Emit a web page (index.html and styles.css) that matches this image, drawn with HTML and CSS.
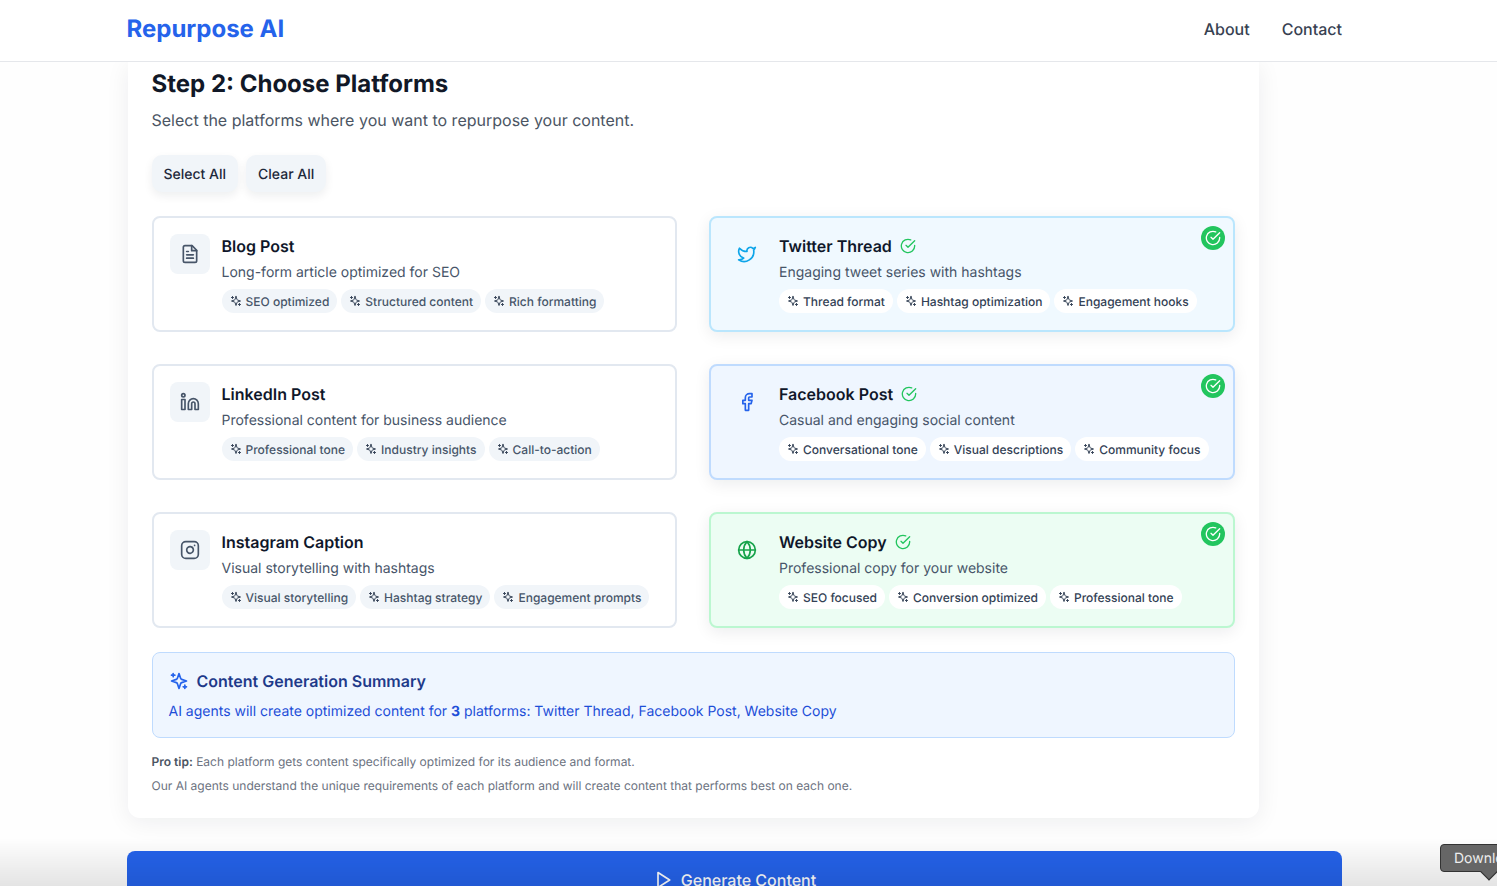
FILE: index.html
```html
<!DOCTYPE html>
<html lang="en">
<head>
<meta charset="utf-8">
<title>Repurpose AI</title>
<link rel="stylesheet" href="styles.css">
</head>
<body>
<svg class="sprite" xmlns="http://www.w3.org/2000/svg">
  <symbol id="i-spark" viewBox="0 0 24 24"><path d="m12 3-1.912 5.813a2 2 0 0 1-1.275 1.275L3 12l5.813 1.912a2 2 0 0 1 1.275 1.275L12 21l1.912-5.813a2 2 0 0 1 1.275-1.275L21 12l-5.813-1.912a2 2 0 0 1-1.275-1.275L12 3Z"/><path d="M5 3v4"/><path d="M19 17v4"/><path d="M3 5h4"/><path d="M17 19h4"/></symbol>
  <symbol id="i-file" viewBox="0 0 24 24"><path d="M14.5 2H6a2 2 0 0 0-2 2v16a2 2 0 0 0 2 2h12a2 2 0 0 0 2-2V7.5L14.5 2z"/><polyline points="14 2 14 8 20 8"/><line x1="16" y1="13" x2="8" y2="13"/><line x1="16" y1="17" x2="8" y2="17"/><line x1="10" y1="9" x2="8" y2="9"/></symbol>
  <symbol id="i-twitter" viewBox="0 0 24 24"><path d="M22 4s-.7 2.1-2 3.4c1.6 10-9.4 17.3-18 11.6 2.2.1 4.4-.6 6-2C3 15.5.5 9.6 3 5c2.2 2.6 5.6 4.1 9 4-.9-4.2 4-6.6 7-3.8 1.1 0 3-1.2 3-1.2z"/></symbol>
  <symbol id="i-facebook" viewBox="0 0 24 24"><path d="M18 2h-3a5 5 0 0 0-5 5v3H7v4h3v8h4v-8h3l1-4h-4V7a1 1 0 0 1 1-1h3z"/></symbol>
  <symbol id="i-linkedin" viewBox="0 0 24 24"><path d="M16 8a6 6 0 0 1 6 6v7h-4v-7a2 2 0 0 0-2-2 2 2 0 0 0-2 2v7h-4v-7a6 6 0 0 1 6-6z"/><rect x="2" y="9" width="4" height="12"/><circle cx="4" cy="4" r="2"/></symbol>
  <symbol id="i-instagram" viewBox="0 0 24 24"><rect x="2" y="2" width="20" height="20" rx="5" ry="5"/><path d="M16 11.37A4 4 0 1 1 12.63 8 4 4 0 0 1 16 11.37z"/><line x1="17.5" y1="6.5" x2="17.51" y2="6.5"/></symbol>
  <symbol id="i-globe" viewBox="0 0 24 24"><circle cx="12" cy="12" r="10"/><path d="M12 2a14.5 14.5 0 0 0 0 20 14.5 14.5 0 0 0 0-20"/><path d="M2 12h20"/></symbol>
  <symbol id="i-check" viewBox="0 0 24 24"><path d="M22 11.08V12a10 10 0 1 1-5.93-9.14"/><path d="m9 11 3 3L22 4"/></symbol>
  <symbol id="i-play" viewBox="0 0 24 24"><polygon points="6 3 20 12 6 21 6 3"/></symbol>
</svg>

<header class="topbar">
  <a class="logo">Repurpose AI</a>
  <nav class="nav"><a>About</a><a>Contact</a></nav>
</header>

<main class="page">
  <section class="panel">
    <h2 class="step-title">Step 2: Choose Platforms</h2>
    <p class="step-sub">Select the platforms where you want to repurpose your content.</p>
    <div class="actions">
      <button class="ghost">Select All</button>
      <button class="ghost">Clear All</button>
    </div>

    <div class="platforms">
      <article class="pcard">
        <span class="picon"><svg class="ico20"><use href="#i-file"/></svg></span>
        <div class="pbody">
          <h3 class="ptitle">Blog Post</h3>
          <p class="pdesc">Long-form article optimized for SEO</p>
          <ul class="tags">
            <li class="tag"><svg class="ico12"><use href="#i-spark"/></svg>SEO optimized</li>
            <li class="tag"><svg class="ico12"><use href="#i-spark"/></svg>Structured content</li>
            <li class="tag"><svg class="ico12"><use href="#i-spark"/></svg>Rich formatting</li>
          </ul>
        </div>
      </article>

      <article class="pcard on on-sky">
        <span class="picon"><svg class="ico20"><use href="#i-twitter"/></svg></span>
        <div class="pbody">
          <h3 class="ptitle">Twitter Thread<svg class="ico16 tick"><use href="#i-check"/></svg></h3>
          <p class="pdesc">Engaging tweet series with hashtags</p>
          <ul class="tags">
            <li class="tag"><svg class="ico12"><use href="#i-spark"/></svg>Thread format</li>
            <li class="tag"><svg class="ico12"><use href="#i-spark"/></svg>Hashtag optimization</li>
            <li class="tag"><svg class="ico12"><use href="#i-spark"/></svg>Engagement hooks</li>
          </ul>
        </div>
        <span class="badge"><svg class="ico16"><use href="#i-check"/></svg></span>
      </article>

      <article class="pcard">
        <span class="picon"><svg class="ico20"><use href="#i-linkedin"/></svg></span>
        <div class="pbody">
          <h3 class="ptitle">LinkedIn Post</h3>
          <p class="pdesc">Professional content for business audience</p>
          <ul class="tags">
            <li class="tag"><svg class="ico12"><use href="#i-spark"/></svg>Professional tone</li>
            <li class="tag"><svg class="ico12"><use href="#i-spark"/></svg>Industry insights</li>
            <li class="tag"><svg class="ico12"><use href="#i-spark"/></svg>Call-to-action</li>
          </ul>
        </div>
      </article>

      <article class="pcard on on-blue">
        <span class="picon"><svg class="ico20"><use href="#i-facebook"/></svg></span>
        <div class="pbody">
          <h3 class="ptitle">Facebook Post<svg class="ico16 tick"><use href="#i-check"/></svg></h3>
          <p class="pdesc">Casual and engaging social content</p>
          <ul class="tags">
            <li class="tag"><svg class="ico12"><use href="#i-spark"/></svg>Conversational tone</li>
            <li class="tag"><svg class="ico12"><use href="#i-spark"/></svg>Visual descriptions</li>
            <li class="tag"><svg class="ico12"><use href="#i-spark"/></svg>Community focus</li>
          </ul>
        </div>
        <span class="badge"><svg class="ico16"><use href="#i-check"/></svg></span>
      </article>

      <article class="pcard">
        <span class="picon"><svg class="ico20"><use href="#i-instagram"/></svg></span>
        <div class="pbody">
          <h3 class="ptitle">Instagram Caption</h3>
          <p class="pdesc">Visual storytelling with hashtags</p>
          <ul class="tags">
            <li class="tag"><svg class="ico12"><use href="#i-spark"/></svg>Visual storytelling</li>
            <li class="tag"><svg class="ico12"><use href="#i-spark"/></svg>Hashtag strategy</li>
            <li class="tag"><svg class="ico12"><use href="#i-spark"/></svg>Engagement prompts</li>
          </ul>
        </div>
      </article>

      <article class="pcard on on-green">
        <span class="picon"><svg class="ico20"><use href="#i-globe"/></svg></span>
        <div class="pbody">
          <h3 class="ptitle">Website Copy<svg class="ico16 tick"><use href="#i-check"/></svg></h3>
          <p class="pdesc">Professional copy for your website</p>
          <ul class="tags">
            <li class="tag"><svg class="ico12"><use href="#i-spark"/></svg>SEO focused</li>
            <li class="tag"><svg class="ico12"><use href="#i-spark"/></svg>Conversion optimized</li>
            <li class="tag"><svg class="ico12"><use href="#i-spark"/></svg>Professional tone</li>
          </ul>
        </div>
        <span class="badge"><svg class="ico16"><use href="#i-check"/></svg></span>
      </article>
    </div>

    <div class="summary">
      <h4 class="summary-title"><svg class="ico20"><use href="#i-spark"/></svg>Content Generation Summary</h4>
      <p class="summary-text">AI agents will create optimized content for <strong>3</strong> platforms: Twitter Thread, Facebook Post, Website Copy</p>
    </div>

    <div class="tips">
      <p><strong>Pro tip:</strong> Each platform gets content specifically optimized for its audience and format.</p>
      <p>Our AI agents understand the unique requirements of each platform and will create content that performs best on each one.</p>
    </div>
  </section>

  <button class="generate"><svg class="ico20"><use href="#i-play"/></svg>Generate Content</button>
</main>

<div class="fade"></div>
<div class="tooltip">Download</div>
</body>
</html>
```
FILE: styles.css
```css
* { box-sizing: border-box; }
html, body { height: 100%; }
body {
  margin: 0;
  overflow: hidden;
  background: #fefefe;
  color: #0f172a;
  font-family: Inter, "Liberation Sans", sans-serif;
  text-rendering: geometricPrecision;
}
h2, h3, h4, p, ul { margin: 0; padding: 0; }
.sprite { display: none; }
svg { fill: none; stroke: currentColor; stroke-width: 2; stroke-linecap: round; stroke-linejoin: round; flex: none; }
.ico12 { width: 12px; height: 12px; }
.ico16 { width: 16px; height: 16px; }
.ico20 { width: 20px; height: 20px; }

.topbar {
  height: 62px;
  padding: 0 155px 0 126.5px;
  display: flex;
  align-items: center;
  justify-content: space-between;
  background: #fff;
  border-bottom: 1px solid #e5e7eb;
  position: relative;
  z-index: 2;
}
.logo { font-size: 24px; font-weight: 700; color: #2563eb; line-height: 32px; margin-top: -4px; }
.nav { display: flex; gap: 32px; font-size: 16px; font-weight: 500; color: #374151; margin-top: -4px; }

.page { padding: 0 155px 0 127px; }
.panel {
  width: 1131px;
  margin-left: .5px;
  padding: 6px 24px 20px;
  background: #fff;
  border-radius: 0 0 12px 12px;
  box-shadow: 0 4px 24px rgba(15, 23, 42, .07);
}
.step-title { font-size: 24px; line-height: 32px; font-weight: 700; color: #111827; }
.step-sub { margin-top: 8px; font-size: 16px; line-height: 24px; color: #4b5563; }
.actions { display: flex; gap: 8px; margin-top: 23px; }
.ghost {
  height: 37px;
  padding: 2px 12px 0;
  border: 0;
  border-radius: 10px;
  background: #f1f5f9;
  color: #1e293b;
  font: 500 14px/20px Inter, "Liberation Sans", sans-serif;
  text-rendering: geometricPrecision;
  box-shadow: 0 4px 10px rgba(15, 23, 42, .07);
}

.platforms {
  display: grid;
  grid-template-columns: 1fr 1fr;
  gap: 32px;
  margin-top: 24px;
}
.pcard {
  position: relative;
  height: 116px;
  display: flex;
  gap: 12px;
  padding: 16px;
  border: 2px solid #e2e8f0;
  border-radius: 8px;
  background: #fff;
}
.picon {
  width: 40px;
  height: 40px;
  display: flex;
  align-items: center;
  justify-content: center;
  border-radius: 8px;
  background: #f1f5f9;
  color: #475569;
  flex: none;
}
.pbody { min-width: 0; }
.ptitle {
  display: flex;
  align-items: center;
  gap: 8px;
  font-size: 16px;
  line-height: 24px;
  font-weight: 600;
  color: #0f172a;
}
.pdesc { margin-top: 5px; font-size: 14px; line-height: 20px; color: #475569; }
.tags { list-style: none; display: flex; gap: 4px; margin-top: 6px; }
.tag {
  height: 24px;
  display: flex;
  align-items: center;
  gap: 4px;
  padding: 0 8px;
  border-radius: 999px;
  background: #f1f5f9;
  font-size: 12px;
  font-weight: 500;
  color: #475569;
  white-space: nowrap;
}
.tag svg { color: #334155; }
.on { box-shadow: 0 4px 16px rgba(15, 23, 42, .08); }
.on .picon { background: transparent; }
.on .tag { background: #fff; color: #334155; }
.on-sky { background: #f0f9ff; border-color: #bae6fd; }
.on-sky .picon { color: #0ea5e9; }
.on-blue { background: #eff6ff; border-color: #bfdbfe; }
.on-blue .picon { color: #2563eb; }
.on-green { background: #ecfdf3; border-color: #bbf7d0; }
.on-green .picon { color: #16a34a; }
.tick { color: #22c55e; }
.badge {
  position: absolute;
  top: 8px;
  right: 8px;
  width: 24px;
  height: 24px;
  display: flex;
  align-items: center;
  justify-content: center;
  border-radius: 50%;
  background: #22c55e;
  color: #fff;
}

.summary {
  margin-top: 24px;
  height: 86px;
  padding: 16px;
  border: 1px solid #bfdbfe;
  border-radius: 8px;
  background: #eff6ff;
}
.summary-title {
  display: flex;
  align-items: center;
  gap: 8px;
  font-size: 16px;
  line-height: 24px;
  font-weight: 600;
  color: #1e3a8a;
}
.summary-title svg { color: #2563eb; }
.summary-text { margin-top: 9px; font-size: 14px; line-height: 20px; color: #1d4ed8; }
.summary-text strong { font-weight: 700; }

.tips { margin-top: 12px; font-size: 12px; line-height: 24px; color: #6b7280; }
.tips strong { font-weight: 600; color: #4b5563; }

.generate {
  width: 100%;
  height: 58px;
  margin-top: 33px;
  display: flex;
  align-items: center;
  justify-content: center;
  gap: 8px;
  border: 0;
  border-radius: 8px;
  background: #2563eb;
  color: #fff;
  font: 500 16px/24px Inter, "Liberation Sans", sans-serif;
  text-rendering: geometricPrecision;
}

.fade {
  position: fixed;
  left: 0;
  right: 0;
  bottom: 0;
  height: 48px;
  background: linear-gradient(to bottom, rgba(0, 0, 0, 0), rgba(0, 0, 0, .1));
  pointer-events: none;
}
.tooltip {
  position: fixed;
  left: 1440px;
  top: 844px;
  width: 120px;
  height: 28px;
  padding: 1px 13px 0;
  border: 1px solid #333;
  border-radius: 4px;
  background: #666;
  color: #eee;
  font-size: 14px;
  line-height: 26px;
  white-space: nowrap;
}
.tooltip::after {
  content: "";
  position: absolute;
  left: 42px;
  top: 21px;
  width: 11px;
  height: 11px;
  background: #666;
  border-right: 1px solid #333;
  border-bottom: 1px solid #333;
  transform: rotate(45deg);
}
```
